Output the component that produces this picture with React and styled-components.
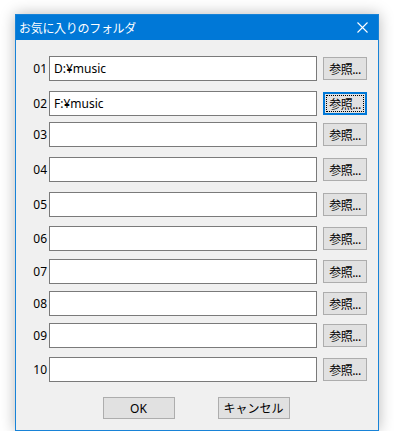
import React from 'react';
import styled, { createGlobalStyle } from 'styled-components';

const GlobalStyle = createGlobalStyle`
    html, body {
        margin: 0;
        padding: 0;
        background: #ffffff;
    }
    body {
        font-family: "Noto Sans", "Noto Sans CJK JP", sans-serif;
        font-size: 12px;
        color: #000;
    }
`;

const Page = styled.div`
    padding: 14px 0 0 15px;
`;

const Window = styled.div`
    width: 364px;
    height: 417px;
    box-sizing: border-box;
    border: 1px solid #1883d7;
    background: #f0f0f0;
    box-shadow: 0 0 14px rgba(0, 0, 0, 0.28);
    display: flex;
    flex-direction: column;
`;

const TitleBar = styled.div`
    height: 25px;
    background: #0078d7;
    color: #fff;
    display: flex;
    align-items: center;
    justify-content: space-between;
    padding: 0 10px 0 3px;
    font-size: 12px;
`;

const Title = styled.span`
    font-family: "Noto Sans CJK JP", sans-serif;
    letter-spacing: -0.3px;
`;

const Body = styled.div`
    padding: 16px 0 0 18px;
    display: flex;
    flex-direction: column;
`;

const Row = styled.div`
    display: flex;
    align-items: flex-start;
    margin-top: ${(p) => p.$gap}px;
`;

const Num = styled.span`
    width: 13px;
    height: 25px;
    margin-right: 2px;
    display: flex;
    align-items: center;
    justify-content: flex-end;
    font-size: 12px;
    color: #000;
`;

const Field = styled.div`
    width: 268px;
    height: 25px;
    box-sizing: border-box;
    border: 1px solid #7a7a7a;
    background: #fff;
    padding: 0 4px;
    display: flex;
    align-items: center;
    font-size: 12px;
`;

const Browse = styled.div`
    width: 44px;
    height: 23px;
    margin: 1px 0 0 6px;
    box-sizing: border-box;
    border: ${(p) => (p.$focused ? '2px solid #0078d7' : '1px solid #adadad')};
    background: #e1e1e1;
    display: flex;
    align-items: center;
    justify-content: center;
    font-family: "Noto Sans CJK JP", sans-serif;
    font-size: 12px;
    letter-spacing: -0.5px;
    outline: ${(p) => (p.$focused ? '1px dotted #000' : 'none')};
    outline-offset: -4px;
`;

const Footer = styled.div`
    margin-top: 15px;
    margin-left: -18px;
    display: flex;
    justify-content: center;
    gap: 43px;
    padding-right: 2px;
`;

const Button = styled.div`
    width: 72px;
    height: 22px;
    box-sizing: border-box;
    border: 1px solid #adadad;
    background: #e1e1e1;
    display: flex;
    align-items: center;
    justify-content: center;
    font-family: "Noto Sans", "Noto Sans CJK JP", sans-serif;
    font-size: 12px;
`;

const rows = [
    { gap: 0, value: 'D:¥music' },
    { gap: 10, value: 'F:¥music', focused: true },
    { gap: 6, value: '' },
    { gap: 10, value: '' },
    { gap: 10, value: '' },
    { gap: 9, value: '' },
    { gap: 8, value: '' },
    { gap: 7, value: '' },
    { gap: 7, value: '' },
    { gap: 9, value: '' },
];

function CloseIcon() {
    return (
        <svg width="11" height="11" viewBox="0 0 11 11">
            <path d="M0.5 0.5 L10.5 10.5 M10.5 0.5 L0.5 10.5" stroke="#fff" strokeWidth="1.1" />
        </svg>
    );
}

function App() {
    return (
        <Page>
            <GlobalStyle />
            <Window>
                <TitleBar>
                    <Title>お気に入りのフォルダ</Title>
                    <CloseIcon />
                </TitleBar>
                <Body>
                    {rows.map((r, i) => (
                        <Row key={i} $gap={r.gap}>
                            <Num>{String(i + 1).padStart(2, '0')}</Num>
                            <Field>{r.value}</Field>
                            <Browse $focused={r.focused}>参照...</Browse>
                        </Row>
                    ))}
                    <Footer>
                        <Button>OK</Button>
                        <Button>キャンセル</Button>
                    </Footer>
                </Body>
            </Window>
        </Page>
    );
}

export default App;
